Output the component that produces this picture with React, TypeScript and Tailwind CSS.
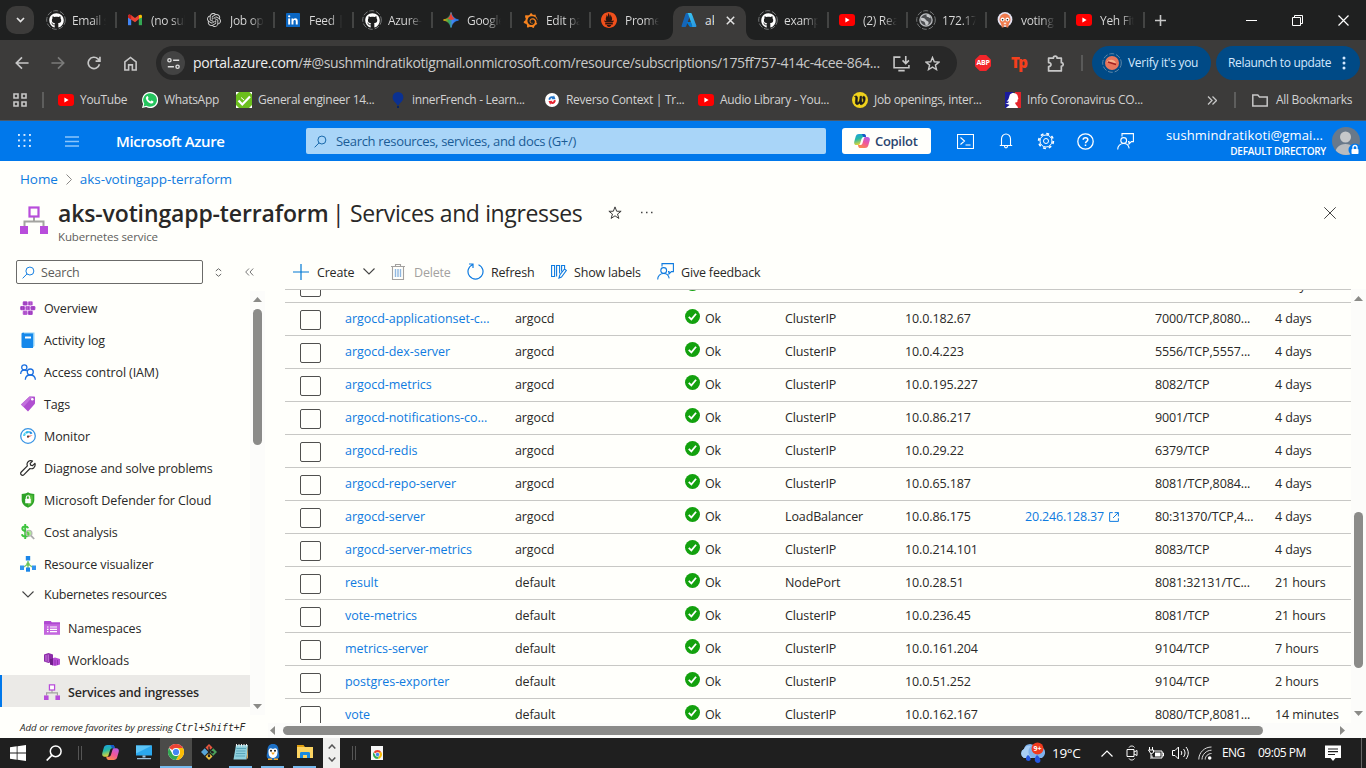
import React from "react";
import { FaGithub } from "react-icons/fa";
import { SiOpenai, SiGrafana, SiPrometheus } from "react-icons/si";

type P = { s?: number; c?: string };

const Svg = ({ s = 16, w, h, vb = "0 0 16 16", className = "", children }: { s?: number; w?: number; h?: number; vb?: string; className?: string; children: React.ReactNode }) => (
  <svg width={w ?? s} height={h ?? s} viewBox={vb} fill="none" className={"block shrink-0 " + className}>
    {children}
  </svg>
);

/* ---------- brand icons ---------- */
const YouTube = () => (
  <Svg><rect y="2" width="16" height="12" rx="3" fill="#f00" /><path d="M6.4 5.6v4.8L10.6 8z" fill="#fff" /></Svg>
);
const Gmail = () => (
  <Svg>
    <path d="M1 13.200V3.900h3.200v9.300z" fill="#4285f4" /><path d="M11.800 13.200V3.900H15v9.300z" fill="#34a853" />
    <path d="M11.800 6.800V3.300C13.300 2.200 15 2.500 15 4.200v1.300z" fill="#fbbc04" />
    <path d="M1 5.500V4.200C1 2.500 2.700 2.200 4 3.100l4 3 4-3v4L8 10.200z" fill="#ea4335" /><path d="M1 5.500V4.200C1 2.500 2.900 2.200 4.200 3.300v4.200z" fill="#c5221f" />
  </Svg>
);
const LinkedIn = () => (
  <Svg s={14}>
    <rect width="16" height="16" rx="1" fill="#0a66c2" />
    <rect x="2.500" y="6.200" width="2.200" height="7" fill="#fff" /><circle cx="3.600" cy="3.800" r="1.300" fill="#fff" />
    <path d="M6.300 6.200h2.100v1c.5-.8 1.300-1.200 2.300-1.200 2 0 2.700 1.300 2.700 3.300v3.900h-2.200V9.700c0-1-.3-1.700-1.200-1.700-1 0-1.500.7-1.500 1.800v3.400H6.300z" fill="#fff" />
  </Svg>
);
const Gemini = () => (
  <Svg>
    <defs><linearGradient id="gem" x1="0" y1="0.500" x2="1" y2="0.500"><stop offset="0" stopColor="#f9ab00" /><stop offset=".35" stopColor="#34a853" /><stop offset=".6" stopColor="#4285f4" /><stop offset="1" stopColor="#1a73e8" /></linearGradient></defs>
    <path d="M8 .5C8.700 4.500 11.500 7.300 15.500 8 11.500 8.700 8.700 11.500 8 15.500 7.300 11.500 4.500 8.700.5 8 4.500 7.300 7.300 4.500 8 .5z" fill="url(#gem)" stroke="url(#gem)" />
    <path d="M8 0C8.700 4 10 6 12 7L8 8 4.500 6.700C6.500 5.300 7.400 3.500 8 0z" fill="#ea4335" />
  </Svg>
);
const Azure = () => (
  <Svg>
    <defs><linearGradient id="az" x1="0" y1="0" x2="1" y2="1"><stop offset="0" stopColor="#3ccbf4" /><stop offset="1" stopColor="#2892df" /></linearGradient></defs>
    <path d="M5.500 1H10L5.200 14.200c-.2.500-.5.800-1 .8H1.500c-.8 0-1.200-.7-.9-1.300L4.600 1.700c.1-.4.500-.7.9-.7z" fill="#1466b8" />
    <path d="M9.800 10H5.500l2.800 4.200c.4.500.8.800 1.300.8h2z" fill="#0078d4" />
    <path d="M10.800 1.700C10.600 1.200 10.300 1 9.900 1H6.200c.4 0 .8.300.9.700l4.100 12c.2.700-.2 1.300-.9 1.300h4.200c.7 0 1.100-.7.900-1.300z" fill="url(#az)" />
  </Svg>
);
const GitHubTab = () => (
  <div className="relative flex size-5 shrink-0 items-center justify-center">
    <FaGithub size={15} color="#fff" />
    <svg className="absolute inset-0" width="20" height="20" viewBox="0 0 20 20" fill="none"><circle cx="10" cy="10" r="9.300" stroke="#77797a" strokeDasharray="5 1.800" /></svg>
  </div>
);
const GlobeTab = () => (
  <div className="relative flex size-5 shrink-0 items-center justify-center">
    <Svg s={14}>
      <circle cx="8" cy="8" r="7" fill="#4b4d50" stroke="#b8babd" strokeWidth="1.500" />
      <path d="M2 5.500C5 5 6.500 6 8 8s3 1 3 3-2 3-3 3-.5-3-2-4-3.500-1-4-2zM9 1.500C8 3 8.500 4.500 10 4.500s2 1.500 3.500 1.500C13 4 11.500 2 9 1.500z" fill="#c6c8ca" />
    </Svg>
    <svg className="absolute inset-0" width="20" height="20" viewBox="0 0 20 20" fill="none"><circle cx="10" cy="10" r="9.300" stroke="#77797a" strokeDasharray="5 1.800" /></svg>
  </div>
);
const Argo = () => (
  <Svg>
    <circle cx="8" cy="7.500" r="7.400" fill="#e5e3f2" /><ellipse cx="8" cy="7.500" rx="5.500" ry="6" fill="#ef7b4d" /><path d="M4 11h8l-.8 4.500H9.500L9 13H7l-.5 2.500H4.800z" fill="#ef7b4d" />
    <circle cx="5.600" cy="7.500" r="2" fill="#fff" /><circle cx="10.400" cy="7.500" r="2" fill="#fff" /><circle cx="5.600" cy="7.700" r=".8" fill="#111" /><circle cx="10.400" cy="7.700" r=".8" fill="#111" /><path d="M6.800 10.600h2.400v1.600H6.800z" fill="#fbe3d8" />
  </Svg>
);
const WhatsApp = () => (
  <Svg>
    <path d="M8 0a8 8 0 0 0-6.900 12L0 16l4.200-1.100A8 8 0 1 0 8 0z" fill="#fff" />
    <path d="M8 1.200a6.800 6.800 0 0 0-5.700 10.500l-.7 2.700 2.800-.7A6.800 6.800 0 1 0 8 1.200z" fill="#25c45e" />
    <path d="M5 4.200c.6-.3.900 0 1.100.6l.4 1c.1.400-.3.800-.6 1.100.6 1.200 1.500 2 2.700 2.500.4-.4.700-1 1.200-.8l1.400.7c.4.200.3.800.1 1.200-.5 1-1.700 1.200-2.700.9-2.300-.7-3.800-2.200-4.600-4.300-.3-1.100.1-2.400 1-2.900z" fill="#fff" />
  </Svg>
);
const GreenCheck = () => (
  <Svg><path d="M0 0h16v16H0z" fill="#6cbf1e" /><path d="M0 0h3L0 3zM16 0v2.500L13.500 0zM0 16v-3l3 3zM16 16h-3l3-3z" fill="#fff" /><path d="M2.500 8.500 6.300 12.500 14 4.500" stroke="#fff" strokeWidth="2.200" /><path d="M5 5.500 8 8" stroke="#fff" /></Svg>
);
const Balloon = () => (
  <Svg><path d="M8 0a5.400 5.400 0 0 1 5.400 5.500C13.400 9 10 10.500 8.900 13h-1.800C6 10.500 2.600 9 2.600 5.500A5.400 5.400 0 0 1 8 0z" fill="#0b3191" /><path d="M7 13.800h2V16H7z" fill="#082463" /></Svg>
);
const Reverso = () => (
  <Svg s={14}><circle cx="8" cy="8" r="8" fill="#fff" /><path d="M4 7.500C4 4.500 7 2.800 9.500 4l.8-1.500L12 7 7.500 7.200 8.300 5.800C7 5.600 6 6.500 6 8z" fill="#2173c7" /><path d="M12.300 8.300c0 3.200-3 5-5.600 3.800L5.900 13.500 4 9l4.600-.2-.9 1.500c1.400.2 2.400-.7 2.400-2.200z" fill="#e6212d" /></Svg>
);
const YellowW = () => (
  <Svg><circle cx="8" cy="8" r="8" fill="#f0d21c" /><path d="M2.500 4.500c1.500-1 3-.5 3 1.300C5.500 8 5 9.500 5.800 10.800 7.300 10.300 8 8 8 4.300h1.800c-.3 2.500-.3 5 .4 6.500 1.300-.6 1.700-2.500.9-4-1-.8-.6-2.600.8-2.600 2.300.3 1.700 7.500-2.600 8.500-1 .1-1.500-.8-1.700-1.800-1 1.500-2 2-3.100 1.600C2.300 12 4 7 3.700 5.600z" fill="#1b1b1b" stroke="#1b1b1b" strokeWidth=".6" /></Svg>
);
const Marianne = () => (
  <Svg><path d="M0 0h8v16H0z" fill="#1b1b9c" /><path d="M10 0h6v16h-6z" fill="#e3242b" /><path d="M5 2.500C6.500 0 12 .3 12.700 4c.2 1.300.8 2.300.6 3-.2.500-.8.500-.8 1s.2 1.800-.6 2.200c-.6.300-1.800-.2-1.800.8s2.500 3 2.900 5H1c1-1.500 3-2.200 3.500-3C3.500 12 2 12.500.5 11.500c2 0 3-1 3.500-2-1 .3-2 0-2.500-.5C4 8.500 4 4.500 5 2.500z" fill="#fff" /></Svg>
);
const Copilot = ({ s = 16 }: P) => (
  <Svg s={s}>
    <defs>
      <linearGradient id="cpa" x1="0" y1="0" x2=".3" y2="1"><stop offset="0" stopColor="#1b9de2" /><stop offset=".5" stopColor="#27b9a4" /><stop offset="1" stopColor="#e6d534" /></linearGradient>
      <linearGradient id="cpb" x1=".8" y1="0" x2=".3" y2="1"><stop offset="0" stopColor="#b65de8" /><stop offset=".5" stopColor="#f0569b" /><stop offset="1" stopColor="#fb8a4c" /></linearGradient>
    </defs>
    <path d="M5 1h4.800c1.200 0 1.700.8 2 1.800L12 4H9.500C8.300 4 7.800 5 7.400 6.300L6.200 10.300C5.800 11.700 5 12 4 12H2.500C.5 12-.2 10.500.3 8.500l1.400-5C2.200 1.800 3.300 1 5 1z" fill="url(#cpa)" />
    <path d="M7.800 1h2c1.200 0 1.700.8 2 1.800L12 4H9.500z" fill="#1a55c9" />
    <path d="M11 15H6.200c-1.200 0-1.700-.8-2-1.800L4 12h2.500c1.200 0 1.700-1 2.100-2.300l1.200-4C10.200 4.300 11 4 12 4h1.500c2 0 2.700 1.500 2.200 3.500l-1.400 5c-.5 1.700-1.600 2.500-3.300 2.500z" fill="url(#cpb)" />
  </Svg>
);
const Chrome = ({ s = 16 }: P) => (
  <Svg s={s}>
    <circle cx="8" cy="8" r="8" fill="#fff" />
    <path d="M8 8 1.070 4A8 8 0 0 1 14.930 4z" fill="#ea4335" /><path d="M8 4h6.930A8 8 0 0 1 8 16l3.460-6z" fill="#fbbc05" /><path d="M1.070 4A8 8 0 0 0 8 16l3.460-6L8 8 4.540 10z" fill="#34a853" />
    <circle cx="8" cy="8" r="4" fill="#fff" /><circle cx="8" cy="8" r="3.100" fill="#4285f4" />
  </Svg>
);

/* ---------- Azure icons ---------- */
const ServiceIcon = ({ s = 16 }: P) => (
  <Svg s={s} vb="0 0 28 28">
    <path d="M14 9.500V16M4.500 20v-4.500h19V20" stroke="#a3a3a0" strokeWidth="2" />
    <rect x="9.500" y="1.500" width="9" height="9" fill="#fffffb" stroke="#b84ddb" strokeWidth="2.200" />
    <rect x="0" y="20" width="8" height="8" fill="#b84ddb" /><rect x="20" y="20" width="8" height="8" fill="#b84ddb" />
  </Svg>
);
const Feedback = ({ c = "#0078d4", s = 17 }: P) => (
  <Svg s={s} vb="0 0 17 17"><g stroke={c} strokeWidth="1.100"><path d="M5 3.500V.6h11.400v8h-2l-2.400 2.400V8.600h-1" /><circle cx="6.700" cy="7.500" r="2.900" /><path d="M.7 16.500c0-3.700 2.500-6 6-6s5 2.200 5.500 4.800" /></g></Svg>
);
const Search = ({ c = "#0f6cbd", s = 14 }: P) => (
  <Svg s={s}><g stroke={c} strokeWidth="1.200"><circle cx="9.700" cy="6.200" r="4.900" /><path d="M6.200 9.700.8 15.200" /></g></Svg>
);
const Overview = () => (
  <Svg>{[[4.200, 1.200], [9.400, 1.200], [1.600, 5.900], [6.800, 5.900], [12, 5.900], [4.200, 10.600], [9.400, 10.600]].map(([x, y], i) => (
    <g key={i}><rect x={x - 1.500} y={y} width="4.900" height="4.400" rx="1.300" fill={i % 2 ? "#c368dd" : "#b04fd0"} /><path d={`M${x} ${y + .6}v3.200M${x + 1.800} ${y + .6}v3.200`} stroke="#7a2a99" strokeWidth=".5" /></g>
  ))}</Svg>
);
const ActivityLog = () => (
  <Svg><path d="M3 .5h11.500v13.500L13 15.500z" fill="#8ed0f7" /><path d="M1.500 2c0-.8.600-1.300 1.400-1.300H4v.8h9V16H2.900c-.8 0-1.400-.6-1.400-1.400z" fill="#1588ea" /><rect x="5" y="4.500" width="6" height="2" rx=".3" fill="#fff" /></Svg>
);
const Access = () => (
  <Svg><g stroke="#1b6fe0" strokeWidth="1.300"><circle cx="4.300" cy="3.400" r="2.600" /><path d="M.7 10c0-2.600 1.500-4 3.600-4 1.200 0 2 .4 2.500 1M5.300 15.700c.2-3 2.300-4.700 5-4.700s4.800 1.700 5.100 4.700" /><circle cx="10.300" cy="8" r="3" /></g></Svg>
);
const Tags = () => (
  <Svg><path d="M9.500.5h4.500c.6 0 1 .4 1 1V7c0 .5-.2.9-.5 1.200L8 15.500 1 8.500z" fill="#b04fd0" /><path d="M9.500.5 1 8.500l2.500 2.500L12.500 1z" fill="#c372dc" /><circle cx="12.300" cy="3.300" r="1.300" fill="#fff" /></Svg>
);
const Monitor = () => (
  <Svg><circle cx="8" cy="8" r="7.300" fill="#fff" stroke="#3a95e4" strokeWidth="1.300" /><path d="M3 8a5 5 0 0 1 1.500-3.500L6 6a3 3 0 0 0-.9 2z" fill="#4fd3f2" /><path d="M5 4.200A5 5 0 0 1 8.800 3v2.100a3 3 0 0 0-2.200.7z" fill="#2bb8e8" /><path d="M9.300 3.100a5 5 0 0 1 3.200 2.200l-1.800 1a3 3 0 0 0-1.400-1.200z" fill="#1b8be0" /><path d="M12.700 7.300 8.800 9.300a1 1 0 1 1-.8-1.600z" fill="#e8604c" /><circle cx="8" cy="8.500" r="1" fill="#444" /></Svg>
);
const Wrench = () => (
  <Svg><path d="M14.900 3.300 12.600 5.600 10.600 5.200 10.200 3.300 12.500 1C10.800.3 8.900.7 7.800 2.200c-.9 1.200-.9 2.600-.4 3.700L1.300 12c-.9.900-.8 2 0 2.800.8.700 1.900.6 2.700-.2l6-6.100c1.400.5 2.800.2 3.900-.8 1.200-1.200 1.500-2.900 1-4.400z" stroke="#2b2b2b" strokeWidth="1.200" strokeLinejoin="round" /></Svg>
);
const Defender = () => (
  <Svg><path d="M8 .3c1.600 1.200 3.800 1.700 6.300 1.700v6c0 3.800-3 6.300-6.300 7.700C4.700 14.300 1.700 11.800 1.700 8V2C4.200 2 6.400 1.500 8 .3z" fill="#2ea328" /><path d="M8 2c1.300.8 3 1.300 4.700 1.400V8c0 3-2.300 4.800-4.700 6z" fill="#57bf3c" /><rect x="5.200" y="6.700" width="5.600" height="4.500" rx=".5" fill="#fff" /><path d="M6.300 7V5.400a1.700 1.700 0 0 1 3.400 0V7" stroke="#fff" strokeWidth="1.100" /></Svg>
);
const Cost = () => (
  <Svg><path d="M8.200 4.200C7.800 3 6.700 2.500 5.200 2.500c-1.700 0-2.900.9-2.900 2.300 0 3.200 6.200 1.900 6.200 5.200 0 1.600-1.300 2.600-3.200 2.600-1.800 0-3.100-.8-3.400-2.300M5.200 0v15" stroke="#3ec43e" strokeWidth="1.900" /><circle cx="9" cy="9.300" r="3" stroke="#b5b5b5" strokeWidth="1.100" fill="#71d14f" fillOpacity=".55" /><path d="m11.200 11.800 3 3.200" stroke="#aaa" strokeWidth="1.700" /></Svg>
);
const Visualizer = () => (
  <Svg><path d="M8 5v7M8 8 3 11.500M8 8l5 3.500" stroke="#7bc96a" strokeWidth="1.400" /><rect x="5.800" y="0" width="4.400" height="4.500" fill="#1b86e8" /><rect x="0" y="9.500" width="4" height="4.500" fill="#3294ee" /><rect x="12" y="9.500" width="4" height="4.500" fill="#3294ee" /><rect x="6" y="11.500" width="4" height="4.200" fill="#1b86e8" /><circle cx="8" cy="8" r="1.700" fill="#6bc257" /></Svg>
);
const Namespaces = () => (
  <Svg><path d="M0 1.800c0-.5.300-.8.800-.8h6l1 1.300H16v12.200H0z" fill="#b04ad2" /><path d="M0 4.200h16v10.300H0z" fill="#c466de" /><path d="M3 7h1.500M6 7h7M3 9.300h1.500M6 9.300h7M3 11.600h1.500M6 11.600h7" stroke="#fff" strokeWidth="1.200" /></Svg>
);
const Workloads = () => (
  <Svg><path d="M0 2.500 4.500 1l4.500 1.500v7L4.500 11 0 9.500z" fill="#8c2ca8" /><path d="M2 3v6.500M4.200 2.500v7.500" stroke="#d48ae8" strokeWidth=".9" /><path d="m6 7 5-1.500L16 7v5.500L11 14l-5-1.500z" fill="#b64cd4" /><path d="m6 7 3-1v7.500l-3-1z" fill="#6f1f8a" /><path d="M11 8v5M13.500 8v5" stroke="#8c2ca8" strokeWidth=".8" /></Svg>
);
const Chev = ({ c = "#444", s = 12 }: P) => <Svg w={s} h={s / 2 + 1} vb="0 0 12 7"><path d="M.5.5 6 6 11.500.5" stroke={c} strokeWidth="1.100" /></Svg>;

/* ---------- browser ---------- */
const tabs: [React.ReactNode, string][] = [
  [<GitHubTab />, "Email s"], [<Gmail />, "(no sub"], [<SiOpenai size={14} color="#d4d4d4" />, "Job op"], [<LinkedIn />, "Feed | L"], [<GitHubTab />, "Azure-V"],
  [<Gemini />, "Google"], [<SiGrafana size={15} color="#f5821f" />, "Edit pa"],
  [<div className="flex size-4 items-center justify-center rounded-full bg-[#2a1510]"><SiPrometheus size={16} color="#f0501c" /></div>, "Prome"],
];
const tabs2: [React.ReactNode, string][] = [
  [<GitHubTab />, "examp"], [<YouTube />, "(2) Rea"], [<GlobeTab />, "172.17"], [<Argo />, "voting"], [<YouTube />, "Yeh Fit"],
];

const Tab = ({ icon, label, sep = true }: { icon: React.ReactNode; label: string; sep?: boolean }) => (
  <div className="flex h-10 w-[79px] shrink-0 items-center">
    <div className="ml-2 flex w-5 justify-center">{icon}</div>
    <div className="ml-[6px] mt-px w-[34px] overflow-hidden whitespace-nowrap bg-gradient-to-r from-[#dcdcdc] from-60% to-transparent bg-clip-text text-[12px] tracking-[-0.3px] text-transparent">{label}</div>
    <div className="flex-1" />
    {sep && <div className="h-4 w-[2px] bg-[#434443]" />}
  </div>
);

const bookmarks: [React.ReactNode, string, string][] = [
  [<YouTube />, "YouTube", "w-[84px]"], [<WhatsApp />, "WhatsApp", "w-[94px]"], [<GreenCheck />, "General engineer 14...", "w-[154px]"], [<Balloon />, "innerFrench - Learn...", "w-[154px]"],
  [<Reverso />, "Reverso Context | Tr...", "w-[154px]"], [<YouTube />, "Audio Library - You...", "w-[154px]"], [<YellowW />, "Job openings, inter...", "w-[153px]"], [<Marianne />, "Info Coronavirus CO...", "w-[190px]"],
];

function Browser() {
  return (
    <div className="h-[121px] border-b border-[#4a5a6c] bg-[#3c3b3a] text-[#e3e3e3]">
      <div className="flex h-10 bg-[#1f2020]">
        <div className="my-[6px] ml-[6px] flex h-7 w-7 items-center justify-center rounded-[10px] bg-[#3c3b3a]"><Svg w={9} h={6} vb="0 0 9 6"><path d="m1 1 3.500 3.500L8 1" stroke="#e3e3e3" strokeWidth="1.700" /></Svg></div>
        <div className="ml-1 flex">{tabs.map(([i, l], k) => <Tab key={k} icon={i} label={l} sep={k < 7} />)}</div>
        <div className="relative ml-[3px] mt-[6px] flex h-[34px] w-[73px] items-center rounded-t-[10px] bg-[#3c3b3a]">
          <svg className="absolute bottom-0 left-[-10px]" width="10" height="10"><path d="M10 0v10H0C6 10 10 6 10 0z" fill="#3c3b3a" /></svg>
          <svg className="absolute bottom-0 right-[-10px]" width="10" height="10"><path d="M0 0v10h10C4 10 0 6 0 0z" fill="#3c3b3a" /></svg>
          <div className="mb-[6px] ml-2"><Azure /></div>
          <span className="mb-[5px] ml-2 w-[9px] overflow-hidden whitespace-nowrap text-[12px]">aks</span>
          <Svg s={9} vb="0 0 9 9" className="mb-[6px] ml-[12px]"><path d="m.8.8 7.400 7.400m0-7.400L.8 8.200" stroke="#e3e3e3" strokeWidth="1.500" /></Svg>
        </div>
        <div className="ml-1 flex">{tabs2.map(([i, l], k) => <Tab key={k} icon={i} label={l} />)}</div>
        <div className="flex flex-1 items-center">
          <Svg s={11} vb="0 0 11 11" className="ml-[10px]"><path d="M5.500 0v11M0 5.500h11" stroke="#c7c7c7" strokeWidth="1.600" /></Svg>
          <Svg s={11} vb="0 0 11 11" className="ml-[80px]"><path d="M0 5.500h11" stroke="#fff" /></Svg>
          <Svg s={11} vb="0 0 11 11" className="ml-[35px]"><path d="M.5 2.500h8v8h-8zM2.500 2.500v-2h8v8h-2" stroke="#fff" /></Svg>
          <Svg s={11} vb="0 0 11 11" className="ml-[35px]"><path d="m.5.5 10 10m0-10-10 10" stroke="#fff" strokeWidth="1.200" /></Svg>
        </div>
      </div>
      <div className="flex h-[46px] items-center">
        <Svg s={14} className="ml-[15px]"><path d="M15.500 8H1.500M8 1.500 1.500 8 8 14.500" stroke="#c7c7c7" strokeWidth="1.900" /></Svg>
        <Svg s={14} className="ml-[22px]"><path d="M.5 8h14M8 1.500 14.500 8 8 14.500" stroke="#7b7b7a" strokeWidth="1.900" /></Svg>
        <Svg s={14} className="ml-[22px]"><path d="M14.200 9.500A6.500 6.500 0 1 1 12.500 3.300L14.500 5.300M14.800.8v5h-5" stroke="#c7c7c7" strokeWidth="1.900" /></Svg>
        <Svg s={15} className="ml-[22px]"><path d="M2 6.300 8 1.500l6 4.800V15H10V9.500H6V15H2z" stroke="#c7c7c7" strokeWidth="1.700" /></Svg>
        <div className="ml-[18px] flex h-[34px] w-[801px] items-center rounded-full bg-[#282828]">
          <div className="ml-[5px] flex size-6 items-center justify-center rounded-full bg-[#434343]"><Svg s={13}><g stroke="#dedede" strokeWidth="1.700"><circle cx="3" cy="4" r="2" /><path d="M7.500 4H15M1 12h7.500" /><circle cx="13" cy="12" r="2" /></g></Svg></div>
          <div className="ml-2 w-[700px] whitespace-nowrap text-[14px] leading-5 tracking-[-0.37px] text-[#c9c9c9]"><span className="text-[#eee]">portal.azure.com</span>/#@sushmindratikotigmail.onmicrosoft.com/resource/subscriptions/175ff757-414c-4cee-864...</div>
          <Svg s={17}><path d="M7 2H1v10h14V9.500M5 14.700h6M12 1v6.500M9 5l3 3 3-3" stroke="#c7c7c7" strokeWidth="1.500" /></Svg>
          <Svg s={15} className="ml-[15px]"><path d="m8 1.500 1.900 4.600 5 .4-3.800 3.200 1.200 4.800L8 11.900l-4.300 2.600 1.200-4.800L1.100 6.500l5-.4z" stroke="#c7c7c7" strokeWidth="1.500" /></Svg>
        </div>
        <div className="ml-[18px] flex size-4 items-center justify-center bg-[#f3252a] text-[7px] font-bold tracking-[-0.3px] text-white [clip-path:polygon(30%_0,70%_0,100%_30%,100%_70%,70%_100%,30%_100%,0_70%,0_30%)]">ABP</div>
        <div className="-mt-[2px] ml-[20px] w-4 text-[15px] font-extrabold leading-4 tracking-[-1.500px] text-[#f43f1c]">Tp</div>
        <Svg s={17} className="ml-[20px]"><path d="M1.500 3h4.500c0-2.500 3.500-2.500 3.500 0h4v4.200c2.300 0 2.300 3.300 0 3.300v4.500h-12v-4.200c3 0 3-3.700 0-3.700z" stroke="#c7c7c7" strokeWidth="1.600" strokeLinejoin="round" /></Svg>
        <div className="ml-[17px] h-4 w-[2px] bg-[#5a5a59]" />
        <div className="ml-[9px] flex h-[34px] w-[119px] items-center rounded-full bg-[#004a86] text-[12px] tracking-[-0.28px] text-[#d3e8ff]">
          <Svg s={20} vb="0 0 20 20" className="ml-[10px]"><circle cx="10" cy="10" r="9.300" stroke="#5d86a8" strokeDasharray="5 1.800" /><circle cx="10" cy="10" r="7" fill="#e8765c" /><path d="M5 9c2-3 7-3 9 1l-5-.5z" fill="#f7b08a" /><path d="m6 9 8 2.500" stroke="#a32020" strokeWidth="1.400" /></Svg>
          <span className="ml-[6px] whitespace-nowrap">Verify it's you</span>
        </div>
        <div className="ml-[5px] flex h-[34px] w-[144px] items-center rounded-full bg-[#004a86] text-[12px] tracking-[-0.33px] text-[#d3e8ff]">
          <span className="ml-3 w-[104px] whitespace-nowrap">Relaunch to update</span>
          <Svg w={4} h={14} vb="0 0 4 14" className="ml-[10px]"><circle cx="2" cy="2" r="1.500" fill="#d3e8ff" /><circle cx="2" cy="7" r="1.500" fill="#d3e8ff" /><circle cx="2" cy="12" r="1.500" fill="#d3e8ff" /></Svg>
        </div>
      </div>
      <div className="flex h-[28px] items-center text-[12px] tracking-[-0.3px] text-[#d2d2d2]">
        <Svg s={14} vb="0 0 14 14" className="ml-[13px]"><path d="M1 1h4v4H1zM9 1h4v4H9zM1 9h4v4H1zM9 9h4v4H9z" stroke="#c7c7c7" strokeWidth="1.600" /></Svg>
        <div className="ml-[15px] mr-[14px] h-4 w-[2px] bg-[#5e5e5d]" />
        {bookmarks.map(([i, l, w]) => <div key={l} className={"flex shrink-0 items-center whitespace-nowrap " + w}><div className="flex w-4 justify-center">{i}</div><span className="ml-[6px]">{l}</span></div>)}
        <div className="flex flex-1 items-center"><div className="flex-1" />
          <Svg w={10} h={9} vb="0 0 10 9"><path d="m1 .5 4 4-4 4M5.500.5l4 4-4 4" stroke="#c7c7c7" strokeWidth="1.300" /></Svg>
          <div className="ml-[17px] h-4 w-[2px] bg-[#5e5e5d]" />
          <Svg w={16} h={13} vb="0 0 16 13" className="ml-[16px]"><path d="M.8 1h5l1.700 2h7.700v9H.8z" stroke="#c7c7c7" strokeWidth="1.500" /></Svg>
          <span className="ml-2 mr-[14px] w-[76px] whitespace-nowrap">All Bookmarks</span>
        </div>
      </div>
    </div>
  );
}

function TopBar() {
  return (
    <div className="flex h-10 items-center bg-[#0078eb] text-white">
      <Svg s={13} vb="0 0 13 13" className="-mt-[2px] ml-[18px]">{[1, 6.500, 12].map(y => [1, 6.500, 12].map(x => <rect key={x + "-" + y} x={x - 1} y={y - 1} width="1.900" height="1.900" fill="#d9ebff" />))}</Svg>
      <Svg w={14} h={11} vb="0 0 14 11" className="ml-[34px]"><path d="M0 1h14M0 5.500h14M0 10h14" stroke="#8cc5fb" strokeWidth="1.300" /></Svg>
      <span className="ml-[37px] w-[190px] whitespace-nowrap text-[15px] font-semibold tracking-[-0.4px]">Microsoft Azure</span>
      <div className="flex h-[26px] w-[520px] items-center rounded-[2px] bg-[#a9d5f8] pl-2"><Search c="#1465a8" s={13} /><span className="ml-[9px] mt-[2px] text-[13px] tracking-[-0.32px] text-[#1a5c96]">Search resources, services, and docs (G+/)</span></div>
      <div className="ml-4 flex h-[26px] w-[89px] items-center rounded-[3px] bg-[#fffffb] pl-3"><Copilot s={16} /><span className="ml-[5px] mt-px text-[13px] font-semibold tracking-[-0.3px] text-[#2a446f]">Copilot</span></div>
      <Svg w={17} h={15} vb="0 0 17 15" className="ml-[26px]"><path d="M.5.5h16v14H.5zM3.500 3.500l4 3.500-4 3.500M8.500 11h5" stroke="#fff" strokeWidth="1.100" /></Svg>
      <Svg w={14} h={16} vb="0 0 14 16" className="ml-[25px]"><path d="M2.500 12.500V6a4.500 5 0 0 1 9 0v6.500M.8 12.500h12.400M5.500 13c0 2.500 3 2.500 3 0" stroke="#fff" strokeWidth="1.100" /></Svg>
      <Svg s={18} vb="0 0 18 18" className="ml-[24px]"><circle cx="9" cy="9" r="2.500" stroke="#fff" /><circle cx="9" cy="9" r="6" stroke="#fff" /><circle cx="9" cy="9" r="7.300" stroke="#fff" strokeWidth="1.800" strokeDasharray="2.870 2.870" /></Svg>
      <Svg s={17} vb="0 0 17 17" className="ml-[22px]"><circle cx="8.500" cy="8.500" r="7.700" stroke="#fff" strokeWidth="1.300" /><path d="M6.200 6.700C6.200 4 10.800 4 10.800 6.700c0 1.700-2.300 1.700-2.300 3.600M8.500 11.500v1.500" stroke="#fff" strokeWidth="1.500" /></Svg>
      <div className="ml-[23px]"><Feedback c="#fff" /></div>
      <div className="ml-[25px] flex w-[167px] flex-col items-end whitespace-nowrap pt-[4px]">
        <span className="mr-[3px] text-[13px] leading-[16px] tracking-[0.12px]">sushmindratikoti@gmai...</span>
        <span className="text-[10px] font-semibold leading-[16px] tracking-[-0.28px]">DEFAULT DIRECTORY</span>
      </div>
      <Svg s={28} vb="0 0 28 28" className="ml-[6px]"><defs><clipPath id="av"><circle cx="14" cy="14" r="14" /></clipPath></defs><g clipPath="url(#av)"><path d="M0 0h28v28H0z" fill="#69798a" /><circle cx="13.500" cy="10" r="5.500" fill="#c6c8ca" /><path d="M3 28c0-7 4-11 10.500-11S24 21 24 28z" fill="#b9bcbf" /></g><circle cx="23" cy="23" r="6.500" fill="#0078eb" /><rect x="19.500" y="22" width="7" height="5" rx=".8" fill="#fff" /><path d="M21 22v-1.500a2 2 0 0 1 4 0V22" stroke="#fff" strokeWidth="1.300" /></Svg>
    </div>
  );
}

/* ---------- sidebar ---------- */
const nav: [React.ReactNode, string][] = [
  [<Overview />, "Overview"], [<ActivityLog />, "Activity log"], [<Access />, "Access control (IAM)"], [<Tags />, "Tags"], [<Monitor />, "Monitor"],
  [<Wrench />, "Diagnose and solve problems"], [<Defender />, "Microsoft Defender for Cloud"], [<Cost />, "Cost analysis"], [<Visualizer />, "Resource visualizer"],
];
const subNav: [React.ReactNode, string][] = [[<Namespaces />, "Namespaces"], [<Workloads />, "Workloads"], [<ServiceIcon />, "Services and ingresses"]];

const Arrow = ({ dir }: { dir: "up" | "down" | "left" | "right" }) => (
  <Svg w={9} h={9} vb="0 0 9 9"><path d={{ up: "M0 7h9L4.500 2z", down: "M0 2h9L4.500 7z", left: "M7 0v9L2 4.500z", right: "M2 0v9l5-4.500z" }[dir]} fill="#8a8a87" /></Svg>
);

function Sidebar() {
  return (
    <div className="flex w-[285px] shrink-0 flex-col">
      <div className="flex h-[35px] items-center pb-[3px]">
        <div className="ml-4 flex h-6 w-[187px] items-center rounded-[2px] border border-[#6b6b69] pl-[5px]"><Search c="#0f7be0" s={13} /><span className="ml-[6px] mt-[2px] tracking-[-0.2px] text-[#5c5b59]">Search</span></div>
        <Svg w={7} h={9} vb="0 0 7 9" className="ml-[12px]"><path d="M.8 3 3.500.7 6.200 3M.8 6l2.700 2.300L6.200 6" stroke="#666" /></Svg>
        <Svg w={9} h={8} vb="0 0 9 8" className="ml-[23px]"><path d="M4 .5.7 4 4 7.500M8.200.5 5 4l3.200 3.500" stroke="#777" /></Svg>
      </div>
      <div className="flex h-[424px]">
        <div className="w-[250px] overflow-hidden tracking-[-0.11px]">
          {nav.map(([i, l]) => <div key={l} className="flex h-8 items-center pl-5 pt-[2px]"><div className="w-4">{i}</div><span className="ml-2 mt-[2px] whitespace-nowrap">{l}</span></div>)}
          <div className="flex h-8 items-start pl-[22px] pt-[8px] leading-4 tracking-[-0.26px]"><div className="pt-[4px]"><Chev /></div><span className="ml-[10px]">Kubernetes resources</span></div>
          {subNav.map(([i, l], k) => <div key={l} className={"flex h-8 items-center pt-[2px] " + (k === 2 ? "border-l-2 border-[#0078eb] bg-[#ebeae7] pl-[42px] font-semibold tracking-[-0.19px]" : "pl-[44px]")}><div className="w-4">{i}</div><span className="ml-2 mt-[2px] whitespace-nowrap">{l}</span></div>)}
        </div>
        <div className="flex w-[15px] flex-col items-center bg-[#fcfcfa] pt-1">
          <Arrow dir="up" /><div className="mt-[5px] h-[136px] w-[9px] rounded-full bg-[#8b8b89]" /><div className="flex-1" /><Arrow dir="down" /><div className="h-1" />
        </div>
      </div>
      <div className="flex flex-1 items-center pt-[3px]">
        <span className="ml-5 whitespace-nowrap text-[9.750px] italic tracking-[-0.03px]">Add or remove favorites by pressing <span className="font-['DejaVu_Sans_Mono',monospace]">Ctrl+Shift+F</span></span>
      </div>
    </div>
  );
}

/* ---------- table ---------- */
type Row = [string, string, string, string, string, string, string];
const rows: Row[] = [
  ["redis", "default", "ClusterIP", "10.0.48.12", "", "6379/TCP", "4 days"],
  ["argocd-applicationset-c...", "argocd", "ClusterIP", "10.0.182.67", "", "7000/TCP,8080...", "4 days"],
  ["argocd-dex-server", "argocd", "ClusterIP", "10.0.4.223", "", "5556/TCP,5557...", "4 days"],
  ["argocd-metrics", "argocd", "ClusterIP", "10.0.195.227", "", "8082/TCP", "4 days"],
  ["argocd-notifications-co...", "argocd", "ClusterIP", "10.0.86.217", "", "9001/TCP", "4 days"],
  ["argocd-redis", "argocd", "ClusterIP", "10.0.29.22", "", "6379/TCP", "4 days"],
  ["argocd-repo-server", "argocd", "ClusterIP", "10.0.65.187", "", "8081/TCP,8084...", "4 days"],
  ["argocd-server", "argocd", "LoadBalancer", "10.0.86.175", "20.246.128.37", "80:31370/TCP,4...", "4 days"],
  ["argocd-server-metrics", "argocd", "ClusterIP", "10.0.214.101", "", "8083/TCP", "4 days"],
  ["result", "default", "NodePort", "10.0.28.51", "", "8081:32131/TC...", "21 hours"],
  ["vote-metrics", "default", "ClusterIP", "10.0.236.45", "", "8081/TCP", "21 hours"],
  ["metrics-server", "default", "ClusterIP", "10.0.161.204", "", "9104/TCP", "7 hours"],
  ["postgres-exporter", "default", "ClusterIP", "10.0.51.252", "", "9104/TCP", "2 hours"],
  ["vote", "default", "ClusterIP", "10.0.162.167", "", "8080/TCP,8081...", "14 minutes"],
];

function Content() {
  return (
    <div className="flex min-w-0 flex-1 flex-col">
      <div className="flex h-[33px] items-center pb-[2px] pl-2 tracking-[-0.18px] [&>span]:mt-[3px]">
        <Svg s={16}><path d="M8 0v16M0 8h16" stroke="#0078d4" strokeWidth="1.200" /></Svg><span className="ml-2 w-[46px]">Create</span><Chev />
        <Svg w={14} h={16} vb="0 0 14 16" className="ml-[16px]"><path d="M0 2.500h14M4.500 2.500v-2h5v2M1.500 2.500v13h11v-13" stroke="#a3a19f" strokeWidth="1.100" /><path d="M4.500 5v8M7 5v8M9.500 5v8" stroke="#8fb7e0" strokeWidth="1.400" /></Svg><span className="ml-[9px] w-[53px] text-[#a3a19f]">Delete</span>
        <Svg s={17} vb="0 0 17 17"><path d="M5.500 1.700a7.500 7.500 0 1 0 6 0M2 1h4v4" stroke="#0f7be0" strokeWidth="1.200" /></Svg><span className="ml-[7px] w-[60px]">Refresh</span>
        <Svg w={16} h={15} vb="0 0 16 15"><path d="M.6 1.500h3v11h-3zM5.600 12.500v-11h3v8M10.600 7.500v-6h3v3M8 14l.8-3L13.500 5l1.800 1.500L10.500 13z" stroke="#0f7be0" strokeWidth="1.100" /></Svg><span className="ml-[7px] w-[83px] whitespace-nowrap">Show labels</span>
        <Feedback c="#0f7be0" /><span className="ml-[7px]">Give feedback</span>
      </div>
      <div className="flex h-[434px]">
        <div className="w-[1066px] overflow-hidden border-t border-[#c8c8c5]">
          <div className="-mt-5">
            {rows.map(([name, ns, type, ip, ext, ports, age], k) => (
              <div key={k} className="grid h-[33px] grid-cols-[60px_170px_170px_100px_120px_120px_130px_120px_76px] whitespace-nowrap border-b border-[#c8c8c5] text-[12.500px] leading-[31px] tracking-[-0.12px]">
                <div className="ml-[15px] mt-[7px] h-5 w-[21px] rounded-[2px] border border-[#50504e]" />
                <span className="tracking-[-0.04px] text-[#0f7be0]">{name}</span><span>{ns}</span>
                <div className="flex"><Svg s={15} className="mt-[6px]"><circle cx="8" cy="8" r="8" fill="#13a10e" /><path d="m4 8.300 2.800 2.800 5-6" stroke="#fff" strokeWidth="1.900" /></Svg><span className="ml-[5px]">Ok</span></div>
                <span>{type}</span><span>{ip}</span>
                <span className="flex h-[31px] items-center tracking-[-0.18px] text-[#0f7be0]">{ext}{ext && <Svg s={10} className="ml-[5px]"><path d="M6 1H1v14h14v-5M9 1h6v6M15 1 6.500 9.500" stroke="#0f7be0" strokeWidth="1.600" /></Svg>}</span>
                <span>{ports}</span><span>{age}</span>
              </div>
            ))}
          </div>
        </div>
        <div className="flex w-[15px] flex-col items-center bg-[#fcfcfa] pt-[5px]"><Arrow dir="up" /><div className="mt-[209px] h-[156px] w-[9px] rounded-full bg-[#8b8b89]" /><div className="mt-[41px]"><Arrow dir="down" /></div></div>
      </div>
      <div className="-ml-[17px] flex h-[15px] items-center bg-[#fcfcfa]"><Arrow dir="left" /><div className="ml-[6px] h-[9px] w-[980px] rounded-full bg-[#8b8b89]" /><div className="ml-[75px]"><Arrow dir="right" /></div></div>
    </div>
  );
}

/* ---------- taskbar ---------- */
function Taskbar() {
  const cell = "flex h-[30px] w-8 shrink-0 items-center justify-center border-b-2 ";
  return (
    <div className="flex h-[30px] items-center bg-[#1f1f1f] text-white">
      <div className="flex w-9 justify-center"><Svg s={16}><path d="m0 2.200 6.700-.9v6.300H0zM7.500 1.200 16 0v7.600H7.500zM0 8.400h6.700v6.300L0 13.800zM7.500 8.400H16V16l-8.500-1.200z" fill="#fff" /></Svg></div>
      <div className="flex w-9 justify-center"><Svg s={16}><circle cx="9.700" cy="6.300" r="5.400" stroke="#fff" strokeWidth="1.500" /><path d="M6 10.200.7 15.500" stroke="#fff" strokeWidth="1.700" /></Svg></div>
      <div className="ml-[6px] h-[14px] w-[4px] border-x border-[#555]" />
      <div className={cell + "ml-[12px] border-transparent"}><Copilot s={17} /></div>
      <div className={cell + "ml-[2px] border-transparent"}><Svg><path d="M0 1.500h16v10H0z" fill="#2ba8ee" /><path d="M0 1.500h16l-16 8z" fill="#5cc5f8" /><path d="M6.500 11.500h3v2h-3zM1 14h14v1.200H1z" fill="#9fc3dd" /></Svg></div>
      <div className={cell + "border-[#76b9ed] bg-[#4b4b49]"}><Chrome s={16} /></div>
      <div className={cell + "ml-px border-transparent"}><Svg><path d="M8 0 11.500 3.500 8 7 4.500 3.500z" fill="#e8563e" /><path d="m12.300 4.300 3.700 3.700-3.700 3.700L8.700 8z" fill="#4ba05a" /><path d="m3.700 4.300L7.300 8l-3.600 3.700L0 8z" fill="#58a6d8" /><path d="m8 9 3.500 3.500L8 16l-3.500-3.500z" fill="#f0c340" /><path d="M8 2.500v10M8 5l3.500 3.500" stroke="#222" strokeWidth="1.200" /><circle cx="8" cy="12" r="1.300" fill="#222" /><circle cx="11.500" cy="8.300" r="1.200" fill="#222" /></Svg></div>
      <div className="ml-[4px] flex h-[30px] w-[23px] items-center justify-center border-b-2 border-[#76b9ed]"><Svg><path d="M3 1h12l-1.500 14.500H.5z" fill="#8fd0dd" /><path d="M15 1v13l-1.500 1.500z" fill="#d7a35a" /><path d="M3.500 4.500h9.500M3.200 7h9.300M3 9.500h9.300M2.500 12h9.500" stroke="#4e9bb0" strokeWidth=".8" /><path d="M3.500 0v2.500M6 0v2.500M8.500 0v2.500M11 0v2.500M13.500 0v2.500" stroke="#eee" /></Svg></div>
      <div className="ml-[9px] flex h-[30px] w-[23px] items-center justify-center border-b-2 border-[#76b9ed]"><Svg><path d="M8 0c4 0 5.500 2.500 5.500 6.500 0 2 .8 3.500.8 5.500 0 2.500-2.500 4-6.300 4s-6.300-1.500-6.300-4c0-2 .8-3.500.8-5.500C2.500 2.500 4 0 8 0z" fill="#1c6fc4" /><path d="M8 5c3-2 4.500 0 4.500 2.500S12 14 8 14s-4.500-4-4.500-6.500S5 3 8 5z" fill="#fff" /><circle cx="6" cy="6.800" r="1" fill="#111" /><circle cx="10" cy="6.800" r="1" fill="#111" /><path d="M6 8.500h4L8 11zM3 14.500h4V16H3zM9 14.500h4V16H9z" fill="#f5a524" /></Svg></div>
      <div className="ml-[9px] flex h-[30px] w-[23px] items-center justify-center border-b-2 border-[#76b9ed]"><Svg><path d="M0 1h6.500l1.500 2H0z" fill="#e0a010" /><path d="M0 3h16v11H0z" fill="#fcd462" /><path d="M3 14V9.500C3 8.700 3.500 8 4.300 8h7.400c.8 0 1.300.7 1.300 1.500V14h-3v-3H6v3z" fill="#1b8ae0" /></Svg></div>
      <div className="ml-[7px] flex h-[30px] w-[17px] flex-col items-center justify-between bg-[#f0f0ee] py-[6px]"><Svg w={8} h={5} vb="0 0 8 5"><path d="M.7 4.500 4 1l3.300 3.500" stroke="#555" strokeWidth="1.500" /></Svg><Svg w={8} h={5} vb="0 0 8 5"><path d="M.7.5 4 4 7.300.5" stroke="#555" strokeWidth="1.500" /></Svg></div>
      <div className="ml-3 h-[14px] w-[4px] border-x border-[#555]" />
      <div className="ml-[15px] flex h-[14px] w-3 items-end justify-center bg-[#f7f7f7] pb-[1px]"><Chrome s={9} /></div>
      <div className="flex-1" />
      <Svg w={26} h={22} vb="0 0 26 22"><path d="M5 16a5 5 0 0 1 0-9 6 6 0 0 1 11-2 6 6 0 0 1 7 11z" fill="#7fb2ec" /><path d="M5 16a5 5 0 0 1 0-9 6 6 0 0 1 7-3c-4 4-3 9 1 12z" fill="#a9cff6" /><path d="M9 13c4 3 3 6 .5 6s-4-3-.5-6zM18 13c5 4 4 8 1 8s-5-4-1-8z" fill="#2456e0" /><circle cx="18.500" cy="6.500" r="6" fill="#f03a1f" /><text x="18.500" y="9" fontSize="7" fontWeight="700" fill="#fff" textAnchor="middle">9+</text></Svg>
      <span className="ml-[7px] w-[49px] text-[13.500px] tracking-[-0.3px]">19°C</span>
      <Svg w={12} h={7} vb="0 0 12 7" className="mr-[13px]"><path d="M.5 6.500 6 1l5.500 5.500" stroke="#fff" strokeWidth="1.200" /></Svg>
      <Svg w={12} h={16} vb="0 0 12 16" className="mr-[10px]"><path d="M1 4.500h7v7H1zM8 7l3-1.500v5L8 9M3 2.500C4 .5 7.500.5 8.500 2.500M3 13.500c1 2 4.500 2 5.500 0" stroke="#fff" /></Svg>
      <Svg w={16} h={12} vb="0 0 16 12" className="mr-2"><path d="M5.500 4h8.500v7H4V8.500M14 6h1.500v3H14M1.500 0v3M4.500 0v3M.5 3h5v2.500L3 7zM3 7v5" stroke="#fff" /><path d="M7 5.500h5.500v4H7z" fill="#fff" /></Svg>
      <Svg w={17} h={14} vb="0 0 17 14" className="mr-[9px]"><path d="M.5 4.500H3L6.500 1v12L3 9.500H.5zM9 5c1 1 1 3 0 4M11.500 3c2 2.500 2 5.500 0 8M14 1c3 4 3 8 0 12" stroke="#fff" /></Svg>
      <Svg w={14} h={14} vb="0 0 14 14" className="mr-[10px]"><path d="M.8 13.500C.8 6.500 6.500 1 13.500 1M4 13.500c0-5 4.500-9.300 9.500-9.300M7.200 13.500c0-3.300 3-6 6.300-6" stroke="#ddd" /><circle cx="11.700" cy="12" r="1.800" fill="#fff" /></Svg>
      <span className="w-9 text-[12px] tracking-[-0.6px]">ENG</span>
      <span className="w-[67px] whitespace-nowrap text-[12px] tracking-[-0.5px]">09:05 PM</span>
      <Svg w={16} h={16}><path d="M0 .5h16v12.500h-5.500L8 16l-2.500-3H0z" fill="#fff" /><path d="M3 4h10M3 6.700h10M3 9.500h7" stroke="#1f1f1f" strokeWidth="1.200" /></Svg>
      <div className="ml-[20px] mr-1 h-full w-px bg-[#666]" />
    </div>
  );
}

export default function App() {
  return (
    <div className="flex h-[768px] w-[1366px] flex-col overflow-hidden bg-[#fffffb] font-['Open_Sans','Noto_Sans',sans-serif] text-[12.500px] text-[#292827]">
      <Browser />
      <TopBar />
      <div className="flex h-9 items-center pl-5 text-[13.500px] tracking-[-0.08px] text-[#0f7be0]">Home<Svg w={6} h={11} vb="0 0 6 11" className="mx-2 mt-px"><path d="m.5.5 5 5-5 5" stroke="#8a8886" /></Svg>aks-votingapp-terraform</div>
      <div className="flex h-[59px]">
        <div className="ml-5 mt-[9px]"><ServiceIcon s={28} /></div>
        <div className="ml-[10px] w-[550px] whitespace-nowrap">
          <div className="text-[23px] leading-8"><span className="font-semibold tracking-[-0.13px]">aks-votingapp-terraform</span><span className="ml-[-2px] tracking-[-0.37px]"> | Services and ingresses</span></div>
          <div className="text-[11.500px] leading-4 tracking-[-0.12px] text-[#605e5c]">Kubernetes service</div>
        </div>
        <div className="mt-[9px]"><Svg s={14}><path d="m8 1 1.900 5h5.100l-4.100 3.200 1.500 5L8 11.200l-4.400 3 1.500-5L1 6h5.100z" stroke="#333" strokeWidth="1.100" /></Svg></div>
        <Svg w={12} h={3} vb="0 0 12 3" className="ml-[19px] mt-[14px]"><path d="M0 1.500h1.500M5 1.500h1.500M10 1.500h1.500" stroke="#444" strokeWidth="1.300" /></Svg>
        <div className="flex-1" />
        <Svg s={12} vb="0 0 12 12" className="mr-[30px] mt-[10px]"><path d="m.3.300 11.400 11.400m0-11.400L.3 11.700" stroke="#444" /></Svg>
      </div>
      <div className="flex h-[482px]"><Sidebar /><Content /></div>
      <Taskbar />
    </div>
  );
}
